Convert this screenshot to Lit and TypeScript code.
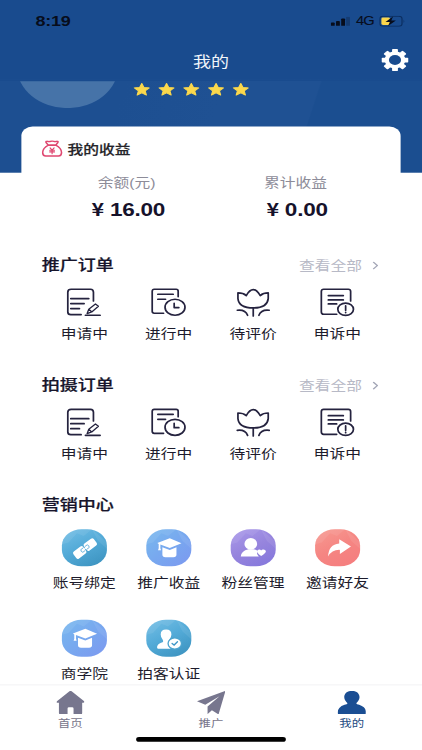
import { LitElement, html, css, svg, TemplateResult } from "lit";
import { customElement, property } from "lit/decorators.js";

const lineIcons: Record<string, TemplateResult> = {
  edit: svg`<path d="M51 82H20Q11 82 11 74V15Q11 6 21 6H79Q88 6 88 15V41M20 34H74M20 49H60M20 64H46M64 84H108"/><path stroke-width="4" d="M69 79L74 66L94 50L103 57L83 74ZM74 66L82 73"/>`,
  clock: svg`<path d="M45 78H17Q11 78 11 72V12Q11 6 17 6H83Q89 6 89 12V28M28 21H74M28 36H51"/><ellipse cx="79.5" cy="60" rx="30" ry="24"/><path d="M77 48V61H91"/>`,
  flower: svg`<path d="M15 17Q31 17 40 25Q50 7 61 7Q71 7 82 25Q91 17 106 17V34Q103 62 61 62Q18 62 15 34Z"/><path d="M61 62V86M13 69Q37 66 44 84M109 69Q85 66 78 84"/>`,
  appeal: svg`<path d="M58 81H19Q12 81 12 74V13Q12 6 19 6H93Q100 6 100 13V41M33 25H78M33 38H78M33 50H58"/><ellipse cx="85" cy="66" rx="23.5" ry="18.5"/><path d="M85 56V69M85 75V76"/>`,
};

const solidIcons: Record<string, TemplateResult> = {
  link: svg`<g transform="translate(69 58) rotate(-37)"><rect x="-38" y="-13" width="36.5" height="26" rx="6"/><rect x="1.5" y="-13" width="36.5" height="26" rx="6"/><path d="M-4 -5H-12Q-16 0-12 5H-4M4 5H12Q16 0 12-5H4" fill="none" stroke="#5fadd8" stroke-width="2.4"/><path d="M-6 0H6" stroke="#fff" stroke-width="3.6"/></g>`,
  cap: svg`<path d="M33 41L70 27L105 42L70 56L42 46V57L44 63H35L37 57V44Z"/><path d="M48 54L70 62L90 54V76Q90 84 81 84H57Q48 84 48 76Z"/>`,
  fans: svg`<ellipse cx="60" cy="44" rx="19" ry="17.5"/><path d="M30 82Q31 65 53 60H68Q77 62 81 66Q75 73 84 82Z"/><path d="M91 80Q79 73 79 67C79 60 88 59 91 64C94 59 105 60 105 67Q104 73 91 80Z"/>`,
  share: svg`<path d="M72 30L107 52L74 74V62Q50 61 39 82Q40 46 72 43Z"/>`,
  verified: svg`<path d="M59 29Q75 29 75 44Q74 54 69 60L72 67V87H35Q32 87 32 82Q33 72 50 67Q51 63 49 60Q43 53 43 44Q43 29 59 29Z"/><ellipse cx="85" cy="71" rx="20" ry="17" stroke="#4da4cf" stroke-width="4"/><path d="M77 71L83 76L93 66" fill="none" stroke="#3e97c7" stroke-width="4"/>`,
};

@customElement("line-entry")
class LineEntry extends LitElement {
  @property() icon = "";
  @property() label = "";
  static styles = css`
    :host { display: flex; flex-direction: column; align-items: center; }
    .glyph { width: 35.5px; height: 33.2px; fill: none; stroke: #25233f; stroke-width: 5.2; stroke-linecap: round; stroke-linejoin: round; }
    .label { font-size: 14px; line-height: 20px; margin-top: 7px; margin-left: -.6px; white-space: nowrap; }
  `;
  render() {
    return html`<svg class="glyph" viewBox="0 0 120 92" preserveAspectRatio="none">${lineIcons[this.icon]}</svg>
      <span class="label">${this.label}</span>`;
  }
}

@customElement("tile-entry")
class TileEntry extends LitElement {
  @property() icon = "";
  @property() label = "";
  @property() tone = "";
  static styles = css`
    :host { display: flex; flex-direction: column; align-items: center; height: 98px; }
    .tile { width: 40.5px; height: 40px; border-radius: 17.5px; overflow: hidden; }
    .sky { background: linear-gradient(150deg, #75bfe6 0%, #54abd8 45%, #3990bd 100%); }
    .blue { background: linear-gradient(135deg, #78b9ee 0%, #78a8ef 50%, #7c98f0 100%); }
    .violet { background: linear-gradient(150deg, #aa9aea 0%, #9684dd 50%, #8276dc 100%); }
    .coral { background: linear-gradient(150deg, #f79a91 0%, #f58582 50%, #f57c7e 100%); }
    .glyph { display: block; width: 100%; height: 100%; fill: #fff; stroke-linecap: round; }
    .facet { opacity: .08; }
    .label { font-size: 14px; line-height: 20px; margin-top: 8px; margin-left: -.6px; white-space: nowrap; }
  `;
  render() {
    return html`<div class="tile ${this.tone}">
        <svg class="glyph" viewBox="0 0 136 111" preserveAspectRatio="none">
          <path class="facet" d="M0 0H90L65 20L45 12L20 40L0 45ZM90 0L136 40V60L108 35Z"/>
          ${solidIcons[this.icon]}
        </svg>
      </div>
      <span class="label">${this.label}</span>`;
  }
}

@customElement("app-root")
class AppRoot extends LitElement {
  static styles = css`
    :host { display: block; width: 422px; height: 750px; overflow: hidden; background: #fff; }
    .screen {
      width: 375px; height: 812px; transform: scale(1.12533, .92365); transform-origin: 0 0;
      display: flex; flex-direction: column; position: relative;
      font-family: "Liberation Sans", "Noto Sans CJK SC", sans-serif; color: #1d1b2c; background: #fff;
    }
    .top { height: 88px; background: #194b8e; flex: none; display: flex; flex-direction: column; }
    .status { height: 46px; padding-bottom: 1px; display: flex; align-items: center; justify-content: space-between; padding: 0 14.8px 1px 31.5px; color: #070d1c; }
    .time { font-size: 16px; font-weight: 700; letter-spacing: -.2px; }
    .signals { display: flex; align-items: center; }
    .bars { width: 17px; height: 10.5px; }
    .net { font-size: 13px; line-height: 16px; margin: 0 4.7px 0 5px; letter-spacing: -.8px; -webkit-text-stroke: .15px #070d1c; }
    .battery { width: 23.5px; height: 12px; }
    .nav { height: 39px; display: grid; grid-template-columns: 36px 1fr 36px; align-items: center; }
    .title { grid-column: 2; text-align: center; font-size: 16px; line-height: 24px; color: #f1f5fa; }
    .gear { width: 24px; height: 24px; margin-top: -4px; }
    .hero { height: 101px; margin-top: -2px; flex: none; overflow: hidden; background: linear-gradient(#194b8e 0 2px, transparent 2px), linear-gradient(105deg, #1d4f91 0 28%, #1f5193 50% 71%, #1b4e90 71.3%); display: flex; }
    .avatar { width: 90px; height: 90px; flex: none; border-radius: 50%; background: #4673a8; clip-path: inset(61px 0 0 0); margin: -59px 0 0 15.4px; }
    .stars { display: flex; margin: 3px 0 0 9.8px; height: 16px; }
    .star { width: 22px; height: 16px; fill: #fbd84c; stroke: #fbd84c; stroke-width: 1; stroke-linejoin: round; }
    .income { background: #fff; margin: -50px 19px 0; height: 138px; flex: none; border-radius: 10px 10px 0 0; }
    .income-head { display: flex; align-items: center; height: 20px; padding: 14px 0 0 18px; font-size: 14px; font-weight: 500; color: #252429; -webkit-text-stroke: .2px #252429; }
    .bag { width: 18.6px; height: 18px; margin-right: 4.3px; }
    .figures { display: grid; grid-template-columns: 150px 150px; margin: 15.5px 0 0 18.5px; text-align: center; }
    .caption { font-size: 14px; line-height: 20px; color: #8d8c99; }
    .amount { font-size: 20px; line-height: 24px; font-weight: 700; margin: 8px 0 0 3px; color: #16122b; letter-spacing: -.2px; }
    .yen { font-family: "Noto Sans CJK SC", sans-serif; font-size: 19px; line-height: 20px; }
    .group { height: 130px; flex: none; padding: 0 37.3px 0 37.7px; }
    .group-head { display: flex; align-items: center; justify-content: space-between; height: 24px; }
    .heading { font-size: 16px; font-weight: 500; line-height: 24px; color: #17152b; margin-left: -.5px; -webkit-text-stroke: .25px #17152b; }
    .all { display: flex; align-items: center; font-size: 14px; line-height: 20px; color: #b7b9c6; padding-right: 2px; margin-top: -1px; }
    .chev { width: 5px; height: 9px; margin: 2px 0 0 9px; fill: none; stroke: #a5a8b8; stroke-width: 1.3; }
    .entries { display: grid; grid-template-columns: repeat(4, 75px); margin-top: 11.5px; }
    .tiles { margin-top: 14px; }
    .tabs { position: absolute; left: 0; right: 0; bottom: 0; height: 71px; background: #fff; border-top: 1.5px solid #f1f1f3; box-sizing: border-box; display: grid; grid-template-columns: repeat(3, 1fr); align-content: start; }
    .tab { display: flex; flex-direction: column; align-items: center; padding-top: 5.5px; font-size: 11px; line-height: 16px; color: #77758a; fill: #77768e; }
    .active { color: #234b82; fill: #1a4e93; }
    .tab-icon { width: 25.4px; height: 25.5px; margin-bottom: 2px; }
    .pill { grid-column: 1 / -1; justify-self: center; width: 133.5px; height: 5px; border-radius: 3px; background: #000; margin-top: 7.2px; }
  `;

  private order(title: string) {
    const items = [["edit", "申请中"], ["clock", "进行中"], ["flower", "待评价"], ["appeal", "申诉中"]];
    return html`<section class="group">
      <div class="group-head">
        <span class="heading">${title}</span>
        <span class="all">查看全部<svg class="chev" viewBox="0 0 5 9"><path d="M.6.6L4.3 4.5L.6 8.4"/></svg></span>
      </div>
      <div class="entries">${items.map(([i, l]) => html`<line-entry icon=${i} label=${l}></line-entry>`)}</div>
    </section>`;
  }

  render() {
    const tiles = [
      ["link", "账号绑定", "sky"], ["cap", "推广收益", "blue"], ["fans", "粉丝管理", "violet"],
      ["share", "邀请好友", "coral"], ["cap", "商学院", "blue"], ["verified", "拍客认证", "sky"],
    ];
    return html`<div class="screen">
      <header class="top">
        <div class="status">
          <span class="time">8:19</span>
          <div class="signals">
            <svg class="bars" viewBox="0 0 17 10" preserveAspectRatio="none" fill="#070d1c"><rect y="6" width="3.4" height="4" rx=".8"/><rect x="4.6" y="4.4" width="3.4" height="5.6" rx=".8"/><rect x="9.2" y="2" width="3.4" height="8" rx=".8"/><rect x="13.6" width="3.4" height="10" rx=".8" opacity=".25"/></svg>
            <span class="net">4G</span>
            <svg class="battery" viewBox="0 0 24.5 12" preserveAspectRatio="none"><rect x=".6" y=".6" width="20.5" height="10.8" rx="3" fill="none" stroke="#0b2e60" stroke-width="1.1"/><path d="M22.6 4Q24 6 22.6 8Z" fill="#0b2e60"/><rect x="2" y="2" width="8" height="8" rx="1.5" fill="#fad54b"/><path d="M12.8.8L5.8 6.8H9.8L8.2 11.2L15.4 5.2H11.2Z" fill="#070d1c"/></svg>
          </div>
        </div>
        <div class="nav">
          <span class="title">我的</span>
          <svg class="gear" viewBox="-12 -12 24 24" fill="#fff">
            ${[0, 45, 90, 135].map((a) => svg`<rect x="-2.6" y="-12" width="5.2" height="24" rx="1" transform="rotate(${a})"/>`)}
            <circle r="9.2"/><circle r="5.4" fill="#194b8e"/>
          </svg>
        </div>
      </header>
      <div class="hero">
        <div class="avatar"></div>
        <div class="stars">${[1, 2, 3, 4, 5].map(() => html`<svg class="star" viewBox="-11 -8 22 16"><path d="M0-6.7L1.9-2.3L6.6-1.9L3 1.3L4.1 6L0 3.5L-4.1 6L-3 1.3L-6.6-1.9L-1.9-2.3Z"/></svg>`)}</div>
      </div>
      <section class="income">
        <div class="income-head">
          <svg class="bag" viewBox="0 0 62 49" preserveAspectRatio="none" fill="none" stroke="#df4770" stroke-width="4.6" stroke-linejoin="round" stroke-linecap="round"><path d="M20 14L13 6Q12 2 17 2Q20 4 24 3Q31 0 37 3Q42 4 45 2Q50 2 48 6L42 14M20 14H42Q59 23 59 36Q59 46 50 46H12Q3 46 3 36Q3 23 20 14Z"/><path stroke-width="3.4" d="M25 22L31 29L37 22M24 29H38M24 34H38M31 29V39"/></svg>
          <span>我的收益</span>
        </div>
        <div class="figures">
          <div><div class="caption">余额(元)</div><div class="amount"><span class="yen">¥</span> 16.00</div></div>
          <div><div class="caption">累计收益</div><div class="amount"><span class="yen">¥</span> 0.00</div></div>
        </div>
      </section>
      ${this.order("推广订单")} ${this.order("拍摄订单")}
      <section class="group">
        <div class="group-head"><span class="heading">营销中心</span></div>
        <div class="entries tiles">${tiles.map(([i, l, t]) => html`<tile-entry icon=${i} label=${l} tone=${t}></tile-entry>`)}</div>
      </section>
      <nav class="tabs">
        <div class="tab"><svg class="tab-icon" viewBox="0 0 86 71" preserveAspectRatio="none"><path d="M43 0Q46 0 50 4L84 31Q87 36 81 36H78V66Q78 71 73 71H52V53Q52 49 48 49H38Q34 49 34 53V71H13Q8 71 8 66V36H4Q-1 36 2 31L36 4Q40 0 43 0Z"/></svg>首页</div>
        <div class="tab"><svg class="tab-icon" viewBox="0 0 86 71" preserveAspectRatio="none"><path d="M86 0L0 31L25 42L68 16L32 47V70L45 58L65 71Z"/></svg>推广</div>
        <div class="tab active"><svg class="tab-icon" viewBox="0 0 86 71" preserveAspectRatio="none"><path d="M43 0C57 0 66 8 66 19C66 27 61 32 56 37Q57 40 65 42Q86 49 86 66Q86 71 80 71H6Q0 71 0 66Q0 49 21 42Q29 40 30 37C25 32 20 27 20 19C20 8 29 0 43 0Z"/></svg>我的</div>
        <div class="pill"></div>
      </nav>
    </div>`;
  }
}
